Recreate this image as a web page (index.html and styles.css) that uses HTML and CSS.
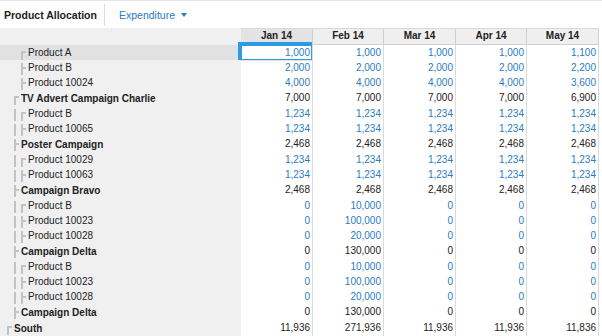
FILE: index.html
```html
<!DOCTYPE html>
<html lang="en">
<head>
    <meta charset="UTF-8">
    <title>Product Allocation</title>
    <link rel="stylesheet" href="styles.css">
</head>
<body>
    <div class="topbar">
        <div class="title">Product Allocation</div>
        <div class="tab">Expenditure <span class="caret"></span></div>
    </div>

    <div class="grid">
        <div class="row head">
            <div class="label"></div>
            <div class="cell cur">Jan 14</div>
            <div class="cell">Feb 14</div>
            <div class="cell">Mar 14</div>
            <div class="cell">Apr 14</div>
            <div class="cell">May 14</div>
        </div>

        <!-- first block, parent scrolled out of view -->
        <div class="row input sel">
            <div class="label"><i class="g"></i><i class="g"></i><i class="g corner"></i>Product A</div>
            <div class="cell active">1,000</div><div class="cell">1,000</div><div class="cell">1,000</div><div class="cell">1,000</div><div class="cell">1,100</div>
        </div>
        <div class="row input">
            <div class="label"><i class="g"></i><i class="g"></i><i class="g tee"></i>Product B</div>
            <div class="cell">2,000</div><div class="cell">2,000</div><div class="cell">2,000</div><div class="cell">2,000</div><div class="cell">2,200</div>
        </div>
        <div class="row input">
            <div class="label"><i class="g"></i><i class="g"></i><i class="g tee"></i>Product 10024</div>
            <div class="cell">4,000</div><div class="cell">4,000</div><div class="cell">4,000</div><div class="cell">4,000</div><div class="cell">3,600</div>
        </div>

        <div class="row grp">
            <div class="label"><i class="g"></i><i class="g corner"></i>TV Advert Campaign Charlie</div>
            <div class="cell">7,000</div><div class="cell">7,000</div><div class="cell">7,000</div><div class="cell">7,000</div><div class="cell">6,900</div>
        </div>
        <div class="row input">
            <div class="label"><i class="g"></i><i class="g pipe"></i><i class="g corner"></i>Product B</div>
            <div class="cell">1,234</div><div class="cell">1,234</div><div class="cell">1,234</div><div class="cell">1,234</div><div class="cell">1,234</div>
        </div>
        <div class="row input">
            <div class="label"><i class="g"></i><i class="g pipe"></i><i class="g tee"></i>Product 10065</div>
            <div class="cell">1,234</div><div class="cell">1,234</div><div class="cell">1,234</div><div class="cell">1,234</div><div class="cell">1,234</div>
        </div>

        <div class="row grp">
            <div class="label"><i class="g"></i><i class="g tee"></i>Poster Campaign</div>
            <div class="cell">2,468</div><div class="cell">2,468</div><div class="cell">2,468</div><div class="cell">2,468</div><div class="cell">2,468</div>
        </div>
        <div class="row input">
            <div class="label"><i class="g"></i><i class="g pipe"></i><i class="g corner"></i>Product 10029</div>
            <div class="cell">1,234</div><div class="cell">1,234</div><div class="cell">1,234</div><div class="cell">1,234</div><div class="cell">1,234</div>
        </div>
        <div class="row input">
            <div class="label"><i class="g"></i><i class="g pipe"></i><i class="g tee"></i>Product 10063</div>
            <div class="cell">1,234</div><div class="cell">1,234</div><div class="cell">1,234</div><div class="cell">1,234</div><div class="cell">1,234</div>
        </div>

        <div class="row grp">
            <div class="label"><i class="g"></i><i class="g tee"></i>Campaign Bravo</div>
            <div class="cell">2,468</div><div class="cell">2,468</div><div class="cell">2,468</div><div class="cell">2,468</div><div class="cell">2,468</div>
        </div>
        <div class="row input">
            <div class="label"><i class="g"></i><i class="g pipe"></i><i class="g corner"></i>Product B</div>
            <div class="cell">0</div><div class="cell">10,000</div><div class="cell">0</div><div class="cell">0</div><div class="cell">0</div>
        </div>
        <div class="row input">
            <div class="label"><i class="g"></i><i class="g pipe"></i><i class="g tee"></i>Product 10023</div>
            <div class="cell">0</div><div class="cell">100,000</div><div class="cell">0</div><div class="cell">0</div><div class="cell">0</div>
        </div>
        <div class="row input">
            <div class="label"><i class="g"></i><i class="g pipe"></i><i class="g tee"></i>Product 10028</div>
            <div class="cell">0</div><div class="cell">20,000</div><div class="cell">0</div><div class="cell">0</div><div class="cell">0</div>
        </div>

        <div class="row grp">
            <div class="label"><i class="g"></i><i class="g tee"></i>Campaign Delta</div>
            <div class="cell">0</div><div class="cell">130,000</div><div class="cell">0</div><div class="cell">0</div><div class="cell">0</div>
        </div>
        <div class="row input">
            <div class="label"><i class="g"></i><i class="g pipe"></i><i class="g corner"></i>Product B</div>
            <div class="cell">0</div><div class="cell">10,000</div><div class="cell">0</div><div class="cell">0</div><div class="cell">0</div>
        </div>
        <div class="row input">
            <div class="label"><i class="g"></i><i class="g pipe"></i><i class="g tee"></i>Product 10023</div>
            <div class="cell">0</div><div class="cell">100,000</div><div class="cell">0</div><div class="cell">0</div><div class="cell">0</div>
        </div>
        <div class="row input">
            <div class="label"><i class="g"></i><i class="g pipe"></i><i class="g tee"></i>Product 10028</div>
            <div class="cell">0</div><div class="cell">20,000</div><div class="cell">0</div><div class="cell">0</div><div class="cell">0</div>
        </div>

        <div class="row grp">
            <div class="label"><i class="g"></i><i class="g tee"></i>Campaign Delta</div>
            <div class="cell">0</div><div class="cell">130,000</div><div class="cell">0</div><div class="cell">0</div><div class="cell">0</div>
        </div>

        <div class="row grp">
            <div class="label"><i class="g corner"></i>South</div>
            <div class="cell">11,936</div><div class="cell">271,936</div><div class="cell">11,936</div><div class="cell">11,936</div><div class="cell">11,836</div>
        </div>
    </div>
</body>
</html>
```

FILE: styles.css
```css
body {
    margin: 0;
    font-family: "Liberation Sans", Arial, sans-serif;
    font-size: 10px;
    color: #222;
    background-color: #fff;
}
.topbar {
    height: 27px;
    border-top: 1px solid #e4e4e4;
    display: flex;
    align-items: center;
}
.title {
    font-weight: bold;
    font-size: 10.5px;
    line-height: 22px;
    padding: 0 7px 0 4px;
    border-right: 1px solid #dcdcdc;
}
.tab {
    color: #2b7bc0;
    font-size: 10.5px;
    margin-left: 14px;
    display: flex;
    align-items: center;
    gap: 6px;
}
.caret {
    border-left: 3px solid transparent;
    border-right: 3px solid transparent;
    border-top: 4px solid #2b7bc0;
}
.grid {
    width: 599px;
}
.row {
    display: grid;
    grid-template-columns: 241px 72px 71px 72px 71px 72px;
    height: 15px;
}
.label {
    background-color: #f0f0f0;
    display: flex;
    padding-left: 7px;
    line-height: 16px;
    white-space: nowrap;
}
.cell {
    box-sizing: border-box;
    background-color: #fff;
    border-right: 1px solid #dadada;
    border-bottom: 1px solid #e4e4e4;
    text-align: right;
    padding-right: 2px;
    line-height: 15px;
}
.row.input .cell {
    color: #2a7bbf;
}
.row.head {
    height: 17px;
}
.row.head .cell {
    background-color: #efefef;
    border-top: 1px solid #d8d8d8;
    border-bottom: 1px solid #cfcfcf;
    border-right-color: #d0d0d0;
    text-align: center;
    font-weight: bold;
    line-height: 14px;
    padding: 0;
}
.row.head .cell.cur {
    background-color: #e3e3e3;
}
.row.grp {
    height: 16px;
}
.row.grp .label {
    font-weight: bold;
    line-height: 17px;
}
.row.grp .cell {
    border-bottom: 2px solid #cbcbcb;
    line-height: 16px;
}
.row.sel .label {
    background-color: #e1e1e1;
}
.cell.active {
    position: relative;
    box-shadow: inset 0 0 0 1px #2d9be2;
}
.cell.active::before {
    content: '';
    position: absolute;
    left: -3px;
    top: -3px;
    bottom: 0;
    width: 3px;
    background-color: #2d9be2;
}
.cell.active::after {
    content: '';
    position: absolute;
    left: 0;
    right: 0;
    top: -3px;
    height: 3px;
    background-color: #2d9be2;
}

/* tree guides */
.g {
    position: relative;
    width: 7px;
    flex: none;
}
.g::before, .g::after {
    position: absolute;
    background-color: #c2c2c2;
}
.g.pipe::before {
    content: '';
    left: 0;
    top: 3px;
    width: 2px;
    height: 12px;
}
.g.tee::before {
    content: '';
    left: 0;
    top: 3px;
    width: 2px;
    height: 12px;
}
.g.tee::after {
    content: '';
    left: 2px;
    top: 7px;
    width: 3px;
    height: 2px;
}
.g.corner::before {
    content: '';
    left: 0;
    top: 6px;
    width: 2px;
    height: 9px;
}
.g.corner::after {
    content: '';
    left: 0;
    top: 6px;
    width: 5px;
    height: 2px;
}
```
